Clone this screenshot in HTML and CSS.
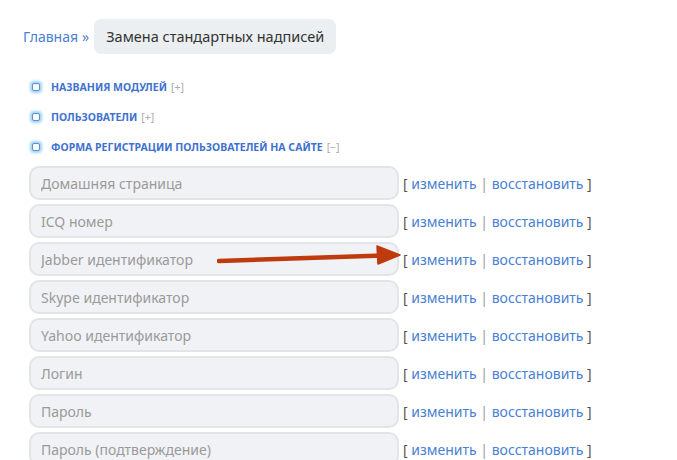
FILE: index.html
```html
<!DOCTYPE html>
<html lang="ru">
<head>
    <meta charset="UTF-8">
    <title>Замена стандартных надписей</title>
    <link rel="stylesheet" href="styles.css">
</head>
<body>
    <div class="breadcrumbs">
        <a href="#">Главная</a>
        <span class="sep">&raquo;</span>
        <span class="current">Замена стандартных надписей</span>
    </div>

    <ul class="groups">
        <li><span class="dot"></span><a href="#">Названия модулей</a> <span class="toggle">[+]</span></li>
        <li><span class="dot"></span><a href="#">Пользователи</a> <span class="toggle">[+]</span></li>
        <li><span class="dot"></span><a href="#">Форма регистрации пользователей на сайте</a> <span class="toggle">[&minus;]</span></li>
    </ul>

    <div class="phrases">
        <div class="phrase">
            <input type="text" placeholder="Домашняя страница">
            <span class="actions">[ <a href="#">изменить</a> <i>|</i> <a href="#">восстановить</a> ]</span>
        </div>
        <div class="phrase">
            <input type="text" placeholder="ICQ номер">
            <span class="actions">[ <a href="#">изменить</a> <i>|</i> <a href="#">восстановить</a> ]</span>
        </div>
        <div class="phrase">
            <input type="text" placeholder="Jabber идентификатор">
            <span class="actions">[ <a href="#">изменить</a> <i>|</i> <a href="#">восстановить</a> ]</span>
            <svg class="arrow" width="190" height="24" viewBox="0 0 190 24">
                <path d="M2 17 L166 11.5" stroke="#bf3a0c" stroke-width="4.5" stroke-linecap="round" fill="none"/>
                <path d="M160 2 L183 11 L161 20 Z" fill="#bf3a0c" stroke="#bf3a0c" stroke-width="1.5" stroke-linejoin="round"/>
            </svg>
        </div>
        <div class="phrase">
            <input type="text" placeholder="Skype идентификатор">
            <span class="actions">[ <a href="#">изменить</a> <i>|</i> <a href="#">восстановить</a> ]</span>
        </div>
        <div class="phrase">
            <input type="text" placeholder="Yahoo идентификатор">
            <span class="actions">[ <a href="#">изменить</a> <i>|</i> <a href="#">восстановить</a> ]</span>
        </div>
        <div class="phrase">
            <input type="text" placeholder="Логин">
            <span class="actions">[ <a href="#">изменить</a> <i>|</i> <a href="#">восстановить</a> ]</span>
        </div>
        <div class="phrase">
            <input type="text" placeholder="Пароль">
            <span class="actions">[ <a href="#">изменить</a> <i>|</i> <a href="#">восстановить</a> ]</span>
        </div>
        <div class="phrase">
            <input type="text" placeholder="Пароль (подтверждение)">
            <span class="actions">[ <a href="#">изменить</a> <i>|</i> <a href="#">восстановить</a> ]</span>
        </div>
    </div>
</body>
</html>
```

FILE: styles.css
```css
body {
    font-family: 'Noto Sans', 'Open Sans', sans-serif;
    margin: 0;
    padding: 0 0 0 23px;
    background: #fff;
    color: #333;
    overflow: hidden;
}

a {
    color: #4a80d2;
    text-decoration: none;
}

.breadcrumbs {
    display: flex;
    align-items: center;
    margin-top: 19px;
    font-size: 14px;
}

.breadcrumbs .sep {
    color: #5a7fc2;
    margin: 0 5px 0 4px;
}

.breadcrumbs .current {
    background: #eceff1;
    color: #333;
    border-radius: 7px;
    padding: 7px 12px 8px;
    font-size: 14.5px;
}

.groups {
    list-style: none;
    margin: 18px 0 0 0;
    padding: 0 0 0 9px;
}

.groups li {
    display: flex;
    align-items: center;
    height: 30px;
    font-size: 10.5px;
}

.groups a {
    font-weight: bold;
    text-transform: uppercase;
    color: #3f72d0;
    margin-right: 4px;
}

.groups .toggle {
    color: #aaa;
}

.dot {
    width: 6px;
    height: 6px;
    border: 1px solid #5a8fd6;
    border-radius: 2px;
    background: #fff;
    margin-right: 11px;
    box-shadow: 0 0 3px 2px #9fd3f3;
}

.phrases {
    margin-top: 2px;
    margin-left: 6px;
}

.phrase {
    position: relative;
    display: flex;
    align-items: center;
    height: 38px;
}

.phrase input {
    width: 370px;
    height: 34px;
    box-sizing: border-box;
    border: 2px solid #e2e4e8;
    border-radius: 10px;
    background: #f1f2f5;
    padding: 0 10px;
    font-family: inherit;
    font-size: 14px;
    outline: none;
}

.phrase input::placeholder {
    color: #9a9a9a;
}

.actions {
    margin-left: 4px;
    font-size: 14px;
    color: #555;
    white-space: nowrap;
}

.actions i {
    font-style: normal;
    color: #999;
}

.arrow {
    position: absolute;
    left: 188px;
    top: 4px;
}
```
